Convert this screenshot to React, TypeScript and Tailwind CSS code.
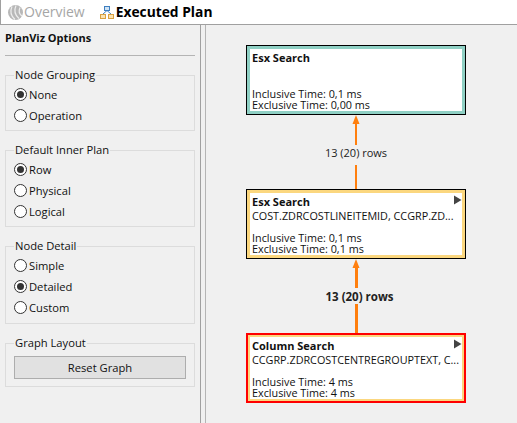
const uiFont = "font-['Open_Sans','Noto_Sans',sans-serif]";

function Radio({ label, checked }: { label: string; checked?: boolean }) {
  return (
    <div className="flex h-[21px] items-center gap-[2px] pl-[8px]">
      <span className="flex h-[13px] w-[13px] items-center justify-center rounded-full border border-[#333] bg-white">
        {checked && <span className="h-[7px] w-[7px] rounded-full bg-[#333]" />}
      </span>
      <span className="text-[11.2px] leading-none text-[#111]">{label}</span>
    </div>
  );
}

function Group({ title, className, children }: { title: string; className: string; children: React.ReactNode }) {
  return (
    <fieldset className={`mx-[5px] w-[190px] border border-[#dcdcdc] ${className}`}>
      <legend className="ml-[8px] px-[1px] text-[11.2px] leading-[14px] text-[#111]">{title}</legend>
      {children}
    </fieldset>
  );
}

function PlanNode({
  top,
  title,
  columns,
  inclusive,
  exclusive,
  outer,
  inner,
}: {
  top: string;
  title: string;
  columns?: string;
  inclusive: string;
  exclusive: string;
  outer: string;
  inner: string;
}) {
  return (
    <div className={`absolute left-[246px] h-[70px] w-[220px] ${top} ${outer}`}>
      <div className={`relative flex h-full flex-col bg-white pl-[2px] text-[10.8px] leading-[11px] text-[#111] ${inner}`}>
        <div className="mt-[2px] text-[11px] leading-[13px] font-bold">{title}</div>
        <div className="mt-[1px] h-[13px] whitespace-nowrap leading-[13px]">{columns}</div>
        <div className="mt-auto mb-[1px]">
          <div>Inclusive Time: {inclusive}</div>
          <div>Exclusive Time: {exclusive}</div>
        </div>
        {columns && (
          <svg className="absolute top-[2px] right-[0px]" width="9" height="10" viewBox="0 0 9 10">
            <path d="M1 0.5 L8.5 5 L1 9.5 Z" fill="#444" />
          </svg>
        )}
      </div>
    </div>
  );
}

function Edge({
  top,
  label,
  upper,
  labelBox,
  lineWidth,
}: {
  top: string;
  label: string;
  upper: string;
  labelBox: string;
  lineWidth: string;
}) {
  return (
    <div className={`absolute left-[306px] flex h-[74px] w-[100px] flex-col items-center ${top}`}>
      <svg width="8" height="9" viewBox="0 0 8 9" className="shrink-0">
        <path d="M4 0 L7.5 9 L0.5 9 Z" fill="#ff7f0e" />
      </svg>
      <div className={`bg-[#ff7f0e] ${lineWidth} ${upper}`} />
      <div className={`leading-[14px] whitespace-nowrap text-[#222] ${labelBox}`}>{label}</div>
      <div className={`grow bg-[#ff7f0e] ${lineWidth}`} />
    </div>
  );
}

export default function App() {
  return (
    <div className={`flex h-[423px] w-[517px] flex-col overflow-hidden bg-[#f0f0f0] ${uiFont}`}>
      {/* Tabs */}
      <div className="flex h-[25px] shrink-0 items-center border-b border-l border-[#a0a0a0] bg-white pl-[6px]">
        <svg width="17" height="17" viewBox="0 0 17 17" className="shrink-0">
          <circle cx="8.5" cy="8.5" r="7.5" fill="#b8b8b8" />
          <path d="M5 2.5 C3 7 4 12 8 15.5 M9 1.5 C7 6 8 11 12 14.5 M13 3.5 C11.5 7 12 10 15 12" stroke="#eee" strokeWidth="1.2" fill="none" />
        </svg>
        <span className="text-[14px] leading-none text-[#a6a6a6]">Overview</span>
        <svg width="14" height="13" viewBox="0 0 14 13" className="ml-[15px] shrink-0">
          <rect x="4.5" y="0.5" width="5" height="4" fill="#cfe3f5" stroke="#3f7fbf" />
          <path d="M7 4.5 L3 8 M7 4.5 L11 8" stroke="#3f7fbf" fill="none" />
          <rect x="0.5" y="8.5" width="5" height="4" fill="#fbe3b0" stroke="#d9a040" />
          <rect x="8.5" y="8.5" width="5" height="4" fill="#fbe3b0" stroke="#d9a040" />
        </svg>
        <span className="ml-[2px] text-[13.8px] leading-none font-bold text-black">Executed Plan</span>
      </div>

      <div className="relative flex min-h-0 grow">
        {/* Options */}
        <div className="w-[201px] shrink-0 border-r border-[#a0a0a0]">
          <div className="pt-[6px] pl-[5px] text-[11px] leading-[14px] font-bold text-[#111]">PlanViz Options</div>
          <div className="mx-[5px] mt-[10px] h-[1px] w-[190px] bg-[#b4b4b4]" />
          <div className="flex flex-col">
            <Group title="Node Grouping" className="mt-[12px] h-[63px] pt-[2px]">
              <Radio label="None" checked />
              <Radio label="Operation" />
            </Group>
            <Group title="Default Inner Plan" className="mt-[12px] h-[84px] pt-[2px]">
              <Radio label="Row" checked />
              <Radio label="Physical" />
              <Radio label="Logical" />
            </Group>
            <Group title="Node Detail" className="mt-[12px] h-[85px] pt-[2px]">
              <Radio label="Simple" />
              <Radio label="Detailed" checked />
              <Radio label="Custom" />
            </Group>
            <Group title="Graph Layout" className="mt-[12px] h-[51px]">
              <button className="mx-[8px] mt-[6px] block h-[23px] w-[172px] border border-[#adadad] bg-[#e1e1e1] text-[11.2px] leading-none text-[#111]">
                Reset Graph
              </button>
            </Group>
          </div>
        </div>
        <div className="ml-[4px] w-[1px] shrink-0 bg-[#b4b4b4]" />

        {/* Graph */}
        <div className="absolute top-[-25px] left-0 h-[423px] w-[517px]">
          <Edge top="top-[115px]" label="13 (20) rows" upper="h-[21px]" labelBox="pt-[1px] pb-[5px] text-[11px]" lineWidth="w-[2px]" />
          <Edge top="top-[259px]" label="13 (20) rows" upper="h-[20px]" labelBox="ml-[7px] pt-[2px] text-[11.5px] font-bold" lineWidth="w-[3px]" />
          <PlanNode
            top="top-[45px]"
            title="Esx Search"
            inclusive="0,1 ms"
            exclusive="0,00 ms"
            outer="border border-black"
            inner="border-[3px] border-[#8fd0c4]"
          />
          <PlanNode
            top="top-[189px]"
            title="Esx Search"
            columns="COST.ZDRCOSTLINEITEMID, CCGRP.ZD..."
            inclusive="0,1 ms"
            exclusive="0,1 ms"
            outer="border border-black"
            inner="border-[3px] border-[#fbd77f]"
          />
          <PlanNode
            top="top-[333px]"
            title="Column Search"
            columns="CCGRP.ZDRCOSTCENTREGROUPTEXT, C..."
            inclusive="4 ms"
            exclusive="4 ms"
            outer="border-2 border-[#ff0000]"
            inner="border-2 border-[#fbd77f]"
          />
        </div>
      </div>
    </div>
  );
}
